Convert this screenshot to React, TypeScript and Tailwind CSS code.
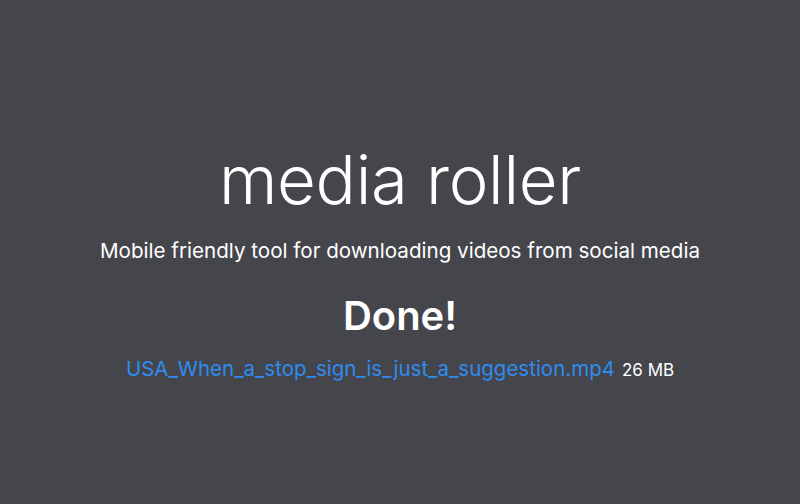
export default function App() {
  return (
    <div className="w-[800px] h-[504px] bg-[#45464b] text-white flex flex-col items-center" style={{ fontFamily: 'Inter, "Noto Sans", sans-serif' }}>
      <h1 className="mt-[140px] text-[67px] leading-[80px] font-light tracking-[-0.3px]">media roller</h1>
      <p className="mt-[18px] text-[20.6px] leading-[25px]">Mobile friendly tool for downloading videos from social media</p>
      <h2 className="mt-[29px] text-[40px] leading-[48px] font-semibold">Done!</h2>
      <div className="mt-[14px] flex items-baseline gap-[7px]">
        <a href="#" className="text-[20.5px] text-[#2f8cf0]">USA_When_a_stop_sign_is_just_a_suggestion.mp4</a>
        <span className="text-[17px]">26 MB</span>
      </div>
    </div>
  );
}
